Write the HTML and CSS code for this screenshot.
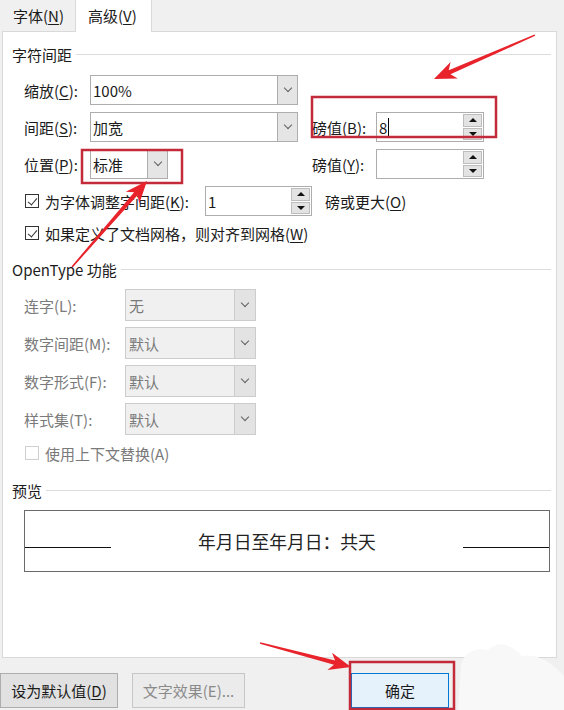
FILE: index.html
```html
<!DOCTYPE html>
<html lang="zh-CN">
<head>
    <meta charset="UTF-8">
    <meta name="viewport" content="width=device-width, initial-scale=1.0">
    <title>字体 - 高级</title>
    <link rel="stylesheet" href="styles.css">
</head>
<body>
    <div class="tabs">
        <div class="tab">字体(<u>N</u>)</div>
        <div class="tab active">高级(<u>V</u>)</div>
    </div>

    <div class="panel">
        <div class="group-title"><span>字符间距</span></div>

        <div class="spacing">
            <label class="first">缩放(<u>C</u>):</label>
            <div class="combo"><span class="value">100%</span><span class="drop"></span></div>

            <label class="first">间距(<u>S</u>):</label>
            <div class="combo"><span class="value">加宽</span><span class="drop"></span></div>
            <label class="pt">磅值(<u>B</u>):</label>
            <div class="spin"><span class="value">8<i class="caret"></i></span><span class="arrows"><b class="up"></b><b class="down"></b></span></div>

            <label class="first">位置(<u>P</u>):</label>
            <div class="combo small"><span class="value">标准</span><span class="drop"></span></div>
            <label class="pt">磅值(<u>Y</u>):</label>
            <div class="spin"><span class="value"></span><span class="arrows"><b class="up"></b><b class="down"></b></span></div>
        </div>

        <div class="check-row kern">
            <span class="checkbox checked"></span>
            <span class="check-text">为字体调整字间距(<u>K</u>):</span>
            <div class="spin"><span class="value">1</span><span class="arrows"><b class="up"></b><b class="down"></b></span></div>
            <span class="after">磅或更大(<u>O</u>)</span>
        </div>

        <div class="check-row grid-snap">
            <span class="checkbox checked"></span>
            <span>如果定义了文档网格，则对齐到网格(<u>W</u>)</span>
        </div>

        <div class="group-title opentype"><span>OpenType 功能</span></div>

        <div class="features">
            <label>连字(L):</label>
            <div class="combo disabled"><span class="value">无</span><span class="drop"></span></div>
            <label>数字间距(M):</label>
            <div class="combo disabled"><span class="value">默认</span><span class="drop"></span></div>
            <label>数字形式(F):</label>
            <div class="combo disabled"><span class="value">默认</span><span class="drop"></span></div>
            <label>样式集(T):</label>
            <div class="combo disabled"><span class="value">默认</span><span class="drop"></span></div>
        </div>

        <div class="check-row contextual">
            <span class="checkbox off"></span>
            <span>使用上下文替换(A)</span>
        </div>

        <div class="group-title preview-title"><span>预览</span></div>

        <div class="preview">
            <span class="rule"></span>
            <span class="sample">年月日至年月日：共天</span>
            <span class="rule"></span>
        </div>
    </div>

    <div class="footer">
        <div class="btn">设为默认值(<u>D</u>)</div>
        <div class="btn disabled">文字效果(E)...</div>
        <div class="btn ok">确定</div>
    </div>

    <!-- пометки поверх скриншота -->
    <svg class="marks" width="564" height="710" viewBox="0 0 564 710">
        <path d="M458 710 L461 664 Q468 646 488 650 Q503 636 522 656 Q542 652 564 676 L564 710 Z" fill="#f8f8f8"/>
        <rect x="312" y="97" width="184" height="40" />
        <rect x="82" y="150" width="100" height="33" />
        <rect x="350" y="662" width="104" height="47" />
        <path class="arrow" transform="translate(434 79) rotate(156.5)" d="M0 0 L-22 -9 L-17 -2.2 L-110 -0.8 L-110 0.8 L-17 2.2 L-22 9 Z"/>
        <path class="arrow" transform="translate(147 181) rotate(-48.9)" d="M0 0 L-22 -9 L-17 -2.2 L-114 -0.8 L-114 0.8 L-17 2.2 L-22 9 Z"/>
        <path class="arrow" transform="translate(351 667) rotate(14.8)" d="M0 0 L-22 -9 L-17 -2.2 L-94 -0.8 L-94 0.8 L-17 2.2 L-22 9 Z"/>
    </svg>
</body>
</html>
```

FILE: styles.css
```css
* {
    box-sizing: border-box;
}
body {
    margin: 0;
    width: 564px;
    height: 710px;
    overflow: hidden;
    position: relative;
    background: #f0f0f0;
    font-family: "Noto Sans CJK SC", "Noto Sans", sans-serif;
    font-size: 15px;
    color: #1b1b1b;
}
u {
    text-underline-offset: 2px;
}
.tabs {
    display: flex;
    height: 31px;
}
.tab {
    width: 75px;
    height: 31px;
    line-height: 31px;
    padding-left: 13px;
}
.tab.active {
    width: 77px;
    height: 32px;
    padding-left: 12px;
    background: #fff;
    border-left: 1px solid #d9d9d9;
    border-right: 1px solid #d9d9d9;
    position: relative;
    z-index: 1;
}
.panel {
    margin-left: 2px;
    width: 555px;
    height: 627px;
    background: #fff;
    border: 1px solid #d9d9d9;
    padding-top: 12px;
}
.group-title {
    display: flex;
    align-items: center;
    height: 20px;
    padding: 0 5px 0 9px;
}
.group-title::after {
    content: "";
    flex: 1;
    border-top: 1px solid #dcdcdc;
    margin-left: 4px;
}
.spacing {
    display: grid;
    grid-template-columns: 66px 208px 14px 64px 108px;
    grid-template-rows: repeat(3, 30px);
    row-gap: 7px;
    align-items: center;
    margin: 11px 0 0 21px;
}
.spacing .first {
    grid-column: 1;
}
.spacing .pt {
    grid-column: 4;
}
.combo {
    display: flex;
    height: 30px;
    border: 1px solid #adadad;
    background: #fff;
}
.combo.small {
    width: 78px;
}
.combo .value,
.spin .value {
    flex: 1;
    display: flex;
    align-items: center;
    padding-left: 2px;
}
.combo .drop {
    width: 20px;
    background: #e5e5e5;
    border-left: 1px solid #adadad;
    display: flex;
    align-items: center;
    justify-content: center;
}
.combo .drop::after {
    content: "";
    width: 5px;
    height: 5px;
    border-right: 1px solid #606060;
    border-bottom: 1px solid #606060;
    transform: translateY(-2px) rotate(45deg);
}
.combo.disabled {
    height: 32px;
    background: #f0f0f0;
    border-color: #cccccc;
    color: #7a7a7a;
}
.combo.disabled .value {
    padding-left: 3px;
}
.combo.disabled .drop {
    width: 21px;
    background: #e3e3e3;
    border-left-color: #cccccc;
}
.spin {
    display: flex;
    height: 30px;
    border: 1px solid #adadad;
    background: #fff;
}
.spin .arrows {
    width: 20px;
    display: flex;
    flex-direction: column;
    gap: 1px;
    padding: 1px 1px 1px 0;
}
.spin .arrows b {
    flex: 1;
    background: #e3e3e3;
    border: 1px solid #bdbdbd;
    display: flex;
    align-items: center;
    justify-content: center;
}
.spin .arrows b::after {
    content: "";
    border-left: 4px solid transparent;
    border-right: 4px solid transparent;
}
.spin .arrows .up::after {
    border-bottom: 4px solid #111;
}
.spin .arrows .down::after {
    border-top: 4px solid #111;
}
.caret {
    width: 1px;
    height: 19px;
    background: #000;
    margin-left: 1px;
}
.check-row {
    display: flex;
    align-items: center;
    padding-left: 22px;
}
.checkbox {
    width: 14px;
    height: 14px;
    border: 1px solid #333;
    margin-right: 6px;
    display: flex;
    align-items: center;
    justify-content: center;
}
.checkbox.checked::after {
    content: "";
    width: 4px;
    height: 8px;
    border-right: 1.3px solid #333;
    border-bottom: 1.3px solid #333;
    transform: translateY(-1px) rotate(40deg);
}
.checkbox.off {
    border-color: #cfcfcf;
}
.kern {
    margin-top: 7px;
    height: 30px;
}
.kern .check-text {
    width: 160px;
}
.kern .spin {
    width: 107px;
}
.kern .after {
    margin-left: 13px;
}
.grid-snap {
    margin-top: 6px;
    height: 22px;
}
.opentype {
    margin-top: 15px;
}
.features {
    display: grid;
    grid-template-columns: 101px 131px;
    grid-template-rows: repeat(4, 32px);
    row-gap: 6px;
    align-items: center;
    margin: 10px 0 0 21px;
    color: #7a7a7a;
}
.contextual {
    margin-top: 8px;
    height: 20px;
    color: #7a7a7a;
}
.preview-title {
    margin-top: 17px;
}
.preview {
    display: flex;
    align-items: center;
    margin: 10px 0 0 21px;
    width: 526px;
    height: 62px;
    border: 1px solid #6a6a6a;
}
.preview .rule {
    width: 86px;
    border-top: 1px solid #111;
    margin-top: 12px;
}
.preview .sample {
    flex: 1;
    text-align: center;
    font-size: 17.8px;
    color: #222;
}
.footer {
    display: flex;
    height: 52px;
    padding-top: 15px;
}
.btn {
    height: 35px;
    width: 118px;
    border: 1px solid #adadad;
    background: #e1e1e1;
    display: flex;
    align-items: center;
    justify-content: center;
}
.btn.disabled {
    width: 113px;
    margin-left: 14px;
    background: #ebebeb;
    border-color: #c6c6c6;
    color: #8a8a8a;
}
.btn.ok {
    width: 98px;
    margin-left: 106px;
    background: #e5f1fb;
    border-color: #0078d7;
}
.marks {
    position: absolute;
    left: 0;
    top: 0;
    pointer-events: none;
}
.marks rect {
    fill: none;
    stroke: #c42b3a;
    stroke-width: 2.5;
}
.marks .arrow {
    fill: #e8232b;
}
```
